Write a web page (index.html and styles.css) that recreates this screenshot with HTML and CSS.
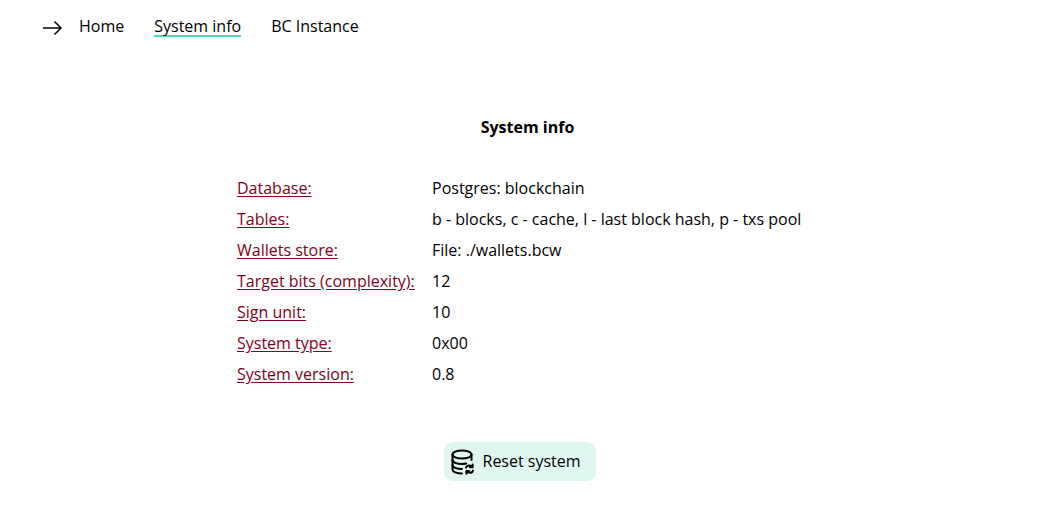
FILE: index.html
```html
<!DOCTYPE html>
<html lang="en">
<head>
<meta charset="utf-8">
<title>System info</title>
<link rel="stylesheet" href="styles.css">
</head>
<body>
<nav class="nav">
  <svg class="nav-arrow" width="20" height="16" viewBox="0 0 20 16" fill="none" stroke="#000" stroke-width="1.5"><path d="M1 8H19"/><path d="M12.5 1.5L19 8L12.5 14.5"/></svg>
  <a class="nav-link" href="#">Home</a>
  <a class="nav-link active" href="#">System info</a>
  <a class="nav-link" href="#">BC Instance</a>
</nav>
<main class="main">
  <h1 class="title">System info</h1>
  <dl class="info">
    <dt>Database:</dt><dd>Postgres: blockchain</dd>
    <dt>Tables:</dt><dd>b - blocks, c - cache, l - last block hash, p - txs pool</dd>
    <dt>Wallets store:</dt><dd>File: ./wallets.bcw</dd>
    <dt>Target bits (complexity):</dt><dd>12</dd>
    <dt>Sign unit:</dt><dd>10</dd>
    <dt>System type:</dt><dd>0x00</dd>
    <dt>System version:</dt><dd>0.8</dd>
  </dl>
  <div class="actions">
    <button class="reset" type="button">
      <svg class="reset-icon" width="24" height="26" viewBox="0 0 24 26" fill="none" stroke="#000" stroke-width="2" stroke-linecap="round" stroke-linejoin="round"><ellipse cx="11" cy="5.5" rx="9.5" ry="4"/><path d="M1.5 5.5V20.5C1.5 22.7 5.5 24.5 11 24.5"/><path d="M20.5 5.5V11"/><path d="M1.5 11C1.5 13.2 5.5 15 11 15C12.6 15 14 14.8 15.2 14.5"/><path d="M1.5 16C1.5 18.2 5.5 20 11 20"/><path d="M15 18.6C15.5 17.2 16.8 16.4 18.2 16.4C19.4 16.4 20.4 17 21 17.9M21.6 15.4V18.2H18.9"/><path d="M22 21.6C21.5 23 20.2 23.8 18.8 23.8C17.6 23.8 16.6 23.2 16 22.3M15.4 24.8V22H18.1"/></svg>
      <span>Reset system</span>
    </button>
  </div>
</main>
</body>
</html>
```
FILE: styles.css
```css
* { box-sizing: border-box; }
html, body { margin: 0; padding: 0; }
body {
  background: #fff;
  color: #000;
  font-family: "Open Sans", sans-serif;
  font-size: 16px;
  line-height: 23px;
}
.nav {
  display: flex;
  align-items: center;
  gap: 30px;
  height: 55px;
  padding-left: 42px;
}
.nav-arrow { margin-right: -13px; }
.nav-link { color: #000; text-decoration: none; border-bottom: 2px solid transparent; line-height: 17px; }
.nav-link.active { border-bottom-color: #4fd8b0; }
.main { padding-top: 61px; }
.title {
  margin: 0;
  text-align: center;
  font-size: 16px;
  line-height: 23px;
  font-weight: 700;
  color: #000;
  padding-left: 16px;
}
.info {
  display: grid;
  grid-template-columns: 195px 1fr;
  row-gap: 8px;
  margin: 38px 0 0 237px;
}
.info dt { color: #800020; text-decoration: underline; text-underline-offset: 2px; }
.info dd { margin: 0; }
.actions { display: flex; justify-content: center; margin-top: 56px; }
.reset {
  display: flex;
  align-items: center;
  gap: 8px;
  height: 39px;
  width: 152px;
  padding: 0 0 0 7px;
  border: 0;
  border-radius: 9px;
  background: #dff7f0;
  color: #000;
  font: inherit;
}
.reset-icon { flex: none; }
```
